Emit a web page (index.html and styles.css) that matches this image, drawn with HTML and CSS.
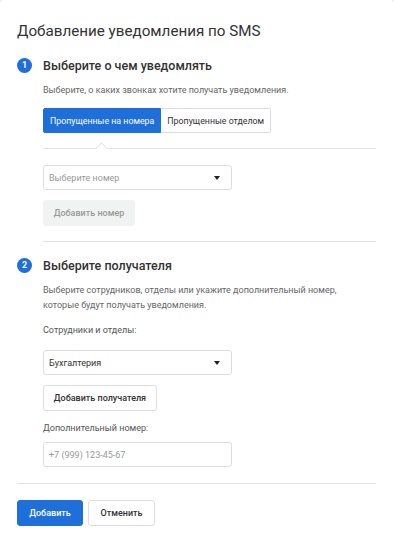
FILE: index.html
```html
<!DOCTYPE html>
<html>
<head>
    <title>Добавление уведомления по SMS</title>
    <link rel="stylesheet" href="styles.css">
</head>
<body>
    <div class="modal">
        <h1 class="modal-title">Добавление уведомления по SMS</h1>

        <div class="step">
            <div class="step-head">
                <span class="step-num">1</span>
                <h2>Выберите о чем уведомлять</h2>
            </div>
            <div class="step-body">
                <p class="hint">Выберите, о каких звонках хотите получать уведомления.</p>
                <div class="tabs">
                    <button class="tab active">Пропущенные на номера</button>
                    <button class="tab">Пропущенные отделом</button>
                </div>
                <div class="tab-line"></div>
                <div class="select placeholder">
                    <span>Выберите номер</span>
                    <span class="caret"></span>
                </div>
                <button class="btn btn-disabled btn-add-number">Добавить номер</button>
                <div class="divider"></div>
            </div>
        </div>

        <div class="step step-2">
            <div class="step-head">
                <span class="step-num">2</span>
                <h2>Выберите получателя</h2>
            </div>
            <div class="step-body">
                <p class="hint">Выберите сотрудников, отделы или укажите дополнительный номер,<br>которые будут получать уведомления.</p>
                <label class="field-label">Сотрудники и отделы:</label>
                <div class="select select-staff">
                    <span>Бухгалтерия</span>
                    <span class="caret"></span>
                </div>
                <button class="btn btn-default btn-add-recipient">Добавить получателя</button>
                <label class="field-label label-phone">Дополнительный номер:</label>
                <input class="input" type="text" placeholder="+7 (999) 123-45-67">
            </div>
        </div>

        <div class="footer">
            <button class="btn btn-primary">Добавить</button>
            <button class="btn btn-default">Отменить</button>
        </div>
    </div>
</body>
</html>
```

FILE: styles.css
```css
* {
    box-sizing: border-box;
}

body {
    margin: 0;
    background: #e9e9e9;
    font-family: Roboto, "Liberation Sans", sans-serif;
    color: #333;
}

.modal {
    background: #fff;
    min-height: 543px;
    padding: 19px 18px 0 17px;
    border-radius: 4px 4px 0 0;
}

.modal-title {
    margin: 0 0 12px;
    font-size: 15.2px;
    font-weight: 400;
    line-height: 24px;
    color: #333;
}

.step-head {
    display: flex;
    align-items: center;
    height: 20px;
}

.step-num {
    width: 15px;
    height: 15px;
    border-radius: 50%;
    background: #1e6fd9;
    color: #fff;
    font-size: 9px;
    font-weight: 700;
    line-height: 15px;
    text-align: center;
    margin-right: 11px;
}

.step-head h2 {
    margin: 0;
    font-size: 12.5px;
    font-weight: 500;
    color: #333;
}

.step-body {
    margin-left: 26px;
}

.hint {
    margin: 8px 0 0;
    font-size: 9px;
    line-height: 15px;
    color: #666;
}

.tabs {
    display: flex;
    margin-top: 10px;
}

.tab {
    height: 25px;
    padding: 0 6px;
    border: 1px solid #ddd;
    background: #fff;
    font-family: inherit;
    font-size: 8.8px;
    white-space: nowrap;
    color: #333;
}

.tab.active {
    background: #1e6fd9;
    border-color: #1e6fd9;
    color: #fff;
    border-radius: 2px 0 0 2px;
}

.tab:last-child {
    border-left: none;
    border-radius: 0 2px 2px 0;
}

.tab-line {
    position: relative;
    margin-top: 15px;
    border-top: 1px solid #e2e2e2;
}

/* notch under the active tab */
.tab-line::before {
    content: "";
    position: absolute;
    left: 54px;
    top: -5px;
    width: 8px;
    height: 8px;
    background: #fff;
    border-top: 1px solid #e2e2e2;
    border-left: 1px solid #e2e2e2;
    transform: rotate(45deg);
}

.select {
    display: flex;
    align-items: center;
    justify-content: space-between;
    width: 189px;
    height: 25px;
    margin-top: 16px;
    padding: 0 11px 0 5px;
    border: 1px solid #ddd;
    border-radius: 3px;
    font-size: 9px;
    color: #333;
}

.select.placeholder {
    color: #999;
}

.caret {
    width: 0;
    height: 0;
    border-left: 3px solid transparent;
    border-right: 3px solid transparent;
    border-top: 4px solid #222;
}

.btn {
    display: block;
    height: 26px;
    padding: 0;
    border: 1px solid #ddd;
    border-radius: 3px;
    background: #fff;
    font-family: inherit;
    font-size: 9px;
    font-weight: 500;
    color: #333;
}

.btn-disabled {
    background: #f1f2f2;
    border-color: #f1f2f2;
    color: #999;
}

.btn-add-number {
    width: 92px;
    margin-top: 10px;
}

.divider {
    margin-top: 15px;
    border-top: 1px solid #e2e2e2;
}

.step-2 {
    margin-top: 13px;
}

.field-label {
    display: block;
    margin-top: 10px;
    font-size: 9px;
    line-height: 15px;
    color: #555;
}

.select-staff {
    margin-top: 12px;
}

.btn-add-recipient {
    width: 114px;
    margin-top: 10px;
}

.label-phone {
    margin-top: 10px;
}

.input {
    display: block;
    width: 189px;
    height: 25px;
    margin-top: 6px;
    padding: 0 5px;
    border: 1px solid #ddd;
    border-radius: 3px;
    font-family: inherit;
    font-size: 9px;
    color: #333;
}

.input::placeholder {
    color: #999;
}

.footer {
    display: flex;
    gap: 5px;
    margin-top: 16px;
    padding-top: 16px;
    border-top: 1px solid #e2e2e2;
}

.btn-primary {
    width: 66px;
    background: #1e6fd9;
    border-color: #1e6fd9;
    color: #fff;
}

.footer .btn-default {
    width: 67px;
}
```
